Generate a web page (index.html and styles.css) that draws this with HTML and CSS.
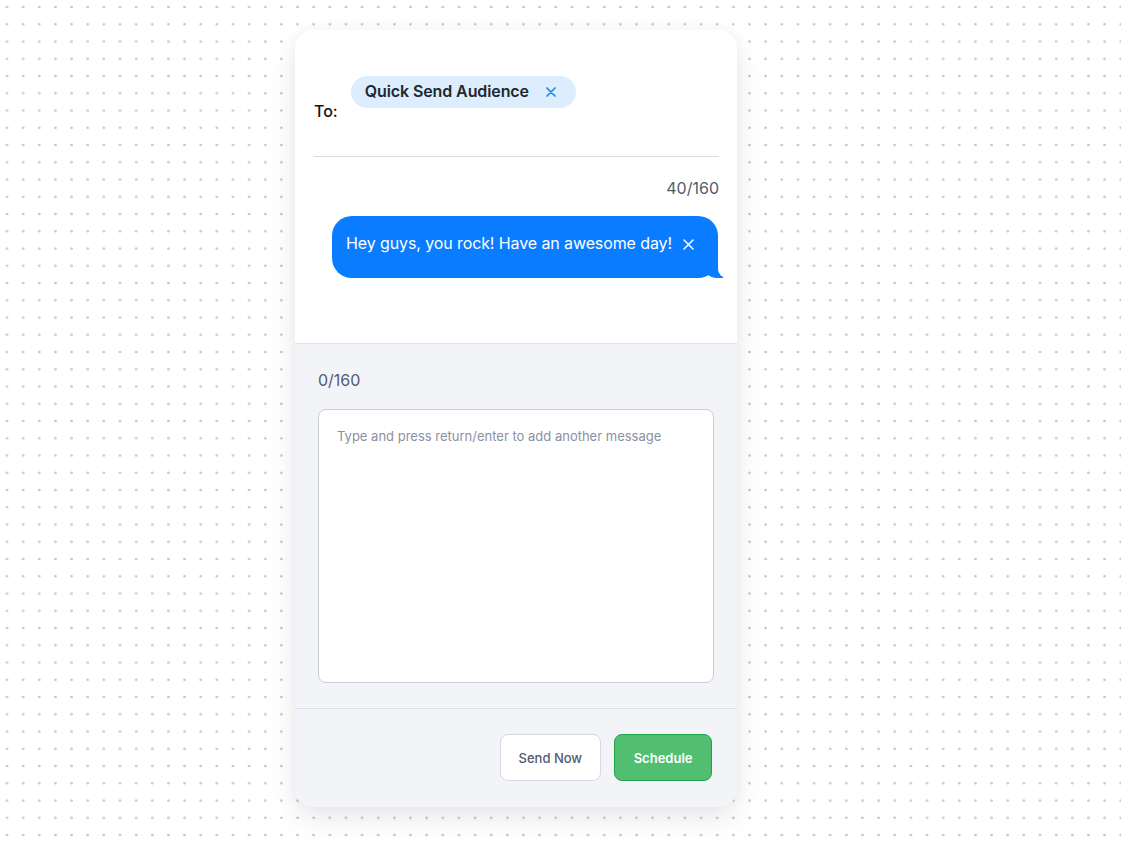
FILE: index.html
```html
<!DOCTYPE html>
<html lang="en">
<head>
<meta charset="utf-8">
<title>Quick Send</title>
<link rel="stylesheet" href="styles.css">
</head>
<body>
<div class="card">
  <section class="compose">
    <div class="recipients">
      <span class="to-label">To:</span>
      <span class="chip">
        <span class="chip-text">Quick Send Audience</span>
        <svg class="chip-x" width="10" height="10" viewBox="0 0 10 10"><path d="M1 1L9 9M9 1L1 9" stroke="#1a86f5" stroke-width="1.7" stroke-linecap="round"/></svg>
      </span>
    </div>
    <div class="counter counter-right">40/160</div>
    <div class="bubble">
      <span class="bubble-text">Hey guys, you rock! Have an awesome day!</span>
      <svg class="bubble-x" width="11" height="11" viewBox="0 0 11 11"><path d="M1 1L10 10M10 1L1 10" stroke="#ffffff" stroke-width="1.5" stroke-linecap="round"/></svg>
    </div>
  </section>
  <section class="editor">
    <div class="counter">0/160</div>
    <textarea class="input" placeholder="Type and press return/enter to add another message"></textarea>
  </section>
  <footer class="actions">
    <button class="btn btn-secondary">Send Now</button>
    <button class="btn btn-primary">Schedule</button>
  </footer>
</div>
</body>
</html>
```
FILE: styles.css
```css
* { box-sizing: border-box; }
html, body { margin: 0; padding: 0; }
body {
  width: 1121px;
  height: 841px;
  overflow: hidden;
  font-family: Inter, "Noto Sans", "Liberation Sans", sans-serif;
  background-color: #ffffff;
  background-image: radial-gradient(circle, #c6c6c6 0.9px, rgba(198,198,198,0) 1.7px);
  background-size: 16.15px 17.25px;
  background-position: -1.07px -1.62px;
}
.card {
  margin: 30px 0 0 295px;
  width: 442px;
  height: 777px;
  border-radius: 18px;
  background: #f3f4f7;
  box-shadow: 0 12px 28px rgba(20, 24, 40, 0.09), 0 0 14px rgba(20, 24, 40, 0.04);
  display: flex;
  flex-direction: column;
  overflow: hidden;
}
.compose {
  background: #ffffff;
  padding: 46px 18px 65px 19px;
  display: flex;
  flex-direction: column;
  border-bottom: 1px solid #e1e3e8;
}
.recipients {
  display: flex;
  align-items: flex-start;
  gap: 13px;
  padding-bottom: 33px;
  border-bottom: 1px solid #d9dbe1;
}
.to-label {
  margin-top: 23px;
  font-size: 16px;
  line-height: 24px;
  font-weight: 500;
  color: #111111;
}
.chip {
  display: inline-flex;
  align-items: center;
  height: 32px;
  padding: 0 20px 3px 14px;
  gap: 17px;
  border-radius: 16px;
  background: #dceefd;
}
.chip-text {
  font-size: 16px;
  font-weight: 600;
  color: #23262e;
  letter-spacing: -0.1px;
}
.chip-x { display: block; position: relative; top: 1px; }
.counter {
  font-size: 16px;
  line-height: 24px;
  color: #525a70;
}
.counter-right {
  text-align: right;
  margin-top: 19px;
}
.bubble {
  position: relative;
  align-self: flex-end;
  margin-top: 16px;
  margin-right: 1px;
  display: flex;
  align-items: center;
  gap: 11px;
  padding: 15px 24px 23px 14px;
  background: #0a7cff;
  border-radius: 20px;
  color: #ffffff;
}
.bubble::before {
  content: "";
  position: absolute;
  right: -5px;
  bottom: 0;
  width: 20px;
  height: 18px;
  background: #0a7cff;
  border-bottom-left-radius: 14px;
}
.bubble::after {
  content: "";
  position: absolute;
  right: -12px;
  bottom: 0;
  width: 12px;
  height: 18px;
  background: #ffffff;
  border-bottom-left-radius: 9px;
}
.bubble-text {
  font-size: 16px;
  line-height: 24px;
  letter-spacing: -0.1px;
}
.bubble-x { display: block; position: relative; top: 1px; }
.editor {
  padding: 24px 23px 25px 23px;
  display: flex;
  flex-direction: column;
  border-bottom: 1px solid #dcdee4;
}
.input {
  margin-top: 17px;
  width: 396px;
  height: 274px;
  resize: none;
  border: 1.5px solid #c9cdd6;
  border-radius: 8px;
  background: #ffffff;
  padding: 16px 18px;
  font-family: Inter, "Noto Sans", "Liberation Sans", sans-serif;
  font-size: 13px;
  line-height: 20px;
  color: #333;
  outline: none;
}
.input::placeholder { color: #8a90a0; }
.actions {
  flex: 1;
  display: flex;
  justify-content: flex-end;
  align-items: flex-start;
  gap: 13px;
  padding: 25px 25px 0 0;
}
.btn {
  height: 47px;
  padding: 0 18px;
  border-radius: 8px;
  font-family: Inter, "Noto Sans", "Liberation Sans", sans-serif;
  font-size: 13px;
  font-weight: 600;
  cursor: pointer;
}
.btn-secondary {
  background: #ffffff;
  border: 1px solid #d6d9e0;
  color: #525a72;
  font-weight: 500;
}
.btn-primary {
  background: #52be70;
  border: 1px solid #22a04c;
  color: #ffffff;
  padding: 0 18.5px;
}
```
